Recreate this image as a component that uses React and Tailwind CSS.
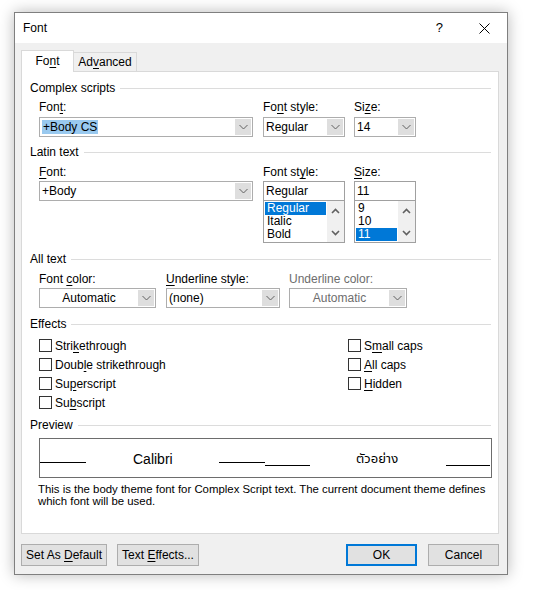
import React from "react";

function U({ children }) {
  return <span className="underline underline-offset-[2px] decoration-[1px]">{children}</span>;
}

function Chev() {
  return (
    <svg width="9" height="6" viewBox="0 0 9 6" fill="none">
      <path d="M0.5 1 L4.5 5 L8.5 1" stroke="#606060" strokeWidth="1" />
    </svg>
  );
}

function Heading({ children }) {
  return (
    <div className="flex items-center h-4">
      <span className="whitespace-nowrap">{children}</span>
      <div className="ml-[5px] flex-1 h-px bg-[#dcdcdc]" />
    </div>
  );
}

function Combo({ className, children, disabled, center }) {
  return (
    <div className={"flex h-[20px] border border-[#adadad] bg-white " + className}>
      <div
        className={
          "flex-1 flex items-center overflow-hidden whitespace-nowrap " +
          (center ? "justify-center " : "pl-[2px] ") +
          (disabled ? "text-[#6d6d6d]" : "")
        }
      >
        <span>{children}</span>
      </div>
      <div className="w-[16px] my-px mr-px bg-[#dedede] flex items-center justify-center">
        <Chev />
      </div>
    </div>
  );
}

function ListBox({ items, selected }) {
  return (
    <div className="h-[42px] border border-[#a0a0a0] border-t-0 flex bg-white">
      <div className="flex-1 px-px pt-px">
        {items.map((it) => (
          <div
            key={it}
            className={
              "h-[13px] leading-[13px] pl-[2px] " +
              (it === selected ? "bg-[#0078d7] text-white" : "")
            }
          >
            {it}
          </div>
        ))}
      </div>
      <div className="w-[17px] bg-[#f0f0f0] flex flex-col items-center justify-between pt-[7px] pb-[6px]">
        <svg width="9" height="6" viewBox="0 0 9 6" fill="none">
          <path d="M1 5 L4.5 1.5 L8 5" stroke="#606060" strokeWidth="1.6" />
        </svg>
        <svg width="9" height="6" viewBox="0 0 9 6" fill="none">
          <path d="M1 1 L4.5 4.5 L8 1" stroke="#606060" strokeWidth="1.6" />
        </svg>
      </div>
    </div>
  );
}

function Check({ children }) {
  return (
    <div className="flex items-center h-[19px]">
      <div className="w-[13px] h-[13px] border border-[#333333] bg-white" />
      <span className="ml-[3px]">{children}</span>
    </div>
  );
}

function Btn({ className, children, primary }) {
  return (
    <div
      className={
        "h-[22px] flex items-center justify-center bg-[#e1e1e1] " +
        (primary ? "border-2 border-[#0078d7] " : "border border-[#adadad] ") +
        className
      }
    >
      <span className="whitespace-nowrap">{children}</span>
    </div>
  );
}

export default function App() {
  return (
    <div className="w-[534px] h-[590px] bg-white pt-[12px] pl-[14px] font-['Liberation_Sans',Arial,sans-serif] text-[12px] text-black leading-4">
      <div className="w-[494px] h-[563px] border border-[#7f7f7f] shadow-[0_0_14px_rgba(0,0,0,0.28)] flex flex-col bg-[#f0f0f0]">
        {/* title bar */}
        <div className="h-[30px] bg-white flex items-center pl-[8px] shrink-0">
          <span>Font</span>
          <span className="ml-auto text-[13px]">?</span>
          <svg className="ml-[36px] mr-[17px]" width="11" height="11" viewBox="0 0 11 11" fill="none">
            <path d="M0.5 0.5 L10.5 10.5 M10.5 0.5 L0.5 10.5" stroke="#000" strokeWidth="1" />
          </svg>
        </div>

        {/* body */}
        <div className="flex-1 flex flex-col pl-[6px] pt-[7px]">
          <div className="flex items-end h-[22px] -mb-px">
            <div className="relative z-10 w-[53px] h-[22px] bg-white border border-[#d9d9d9] border-b-0 flex items-center justify-center pb-[1px]">
              <span>
                Fo<U>n</U>t
              </span>
            </div>
            <div className="w-[63px] h-[20px] bg-[#f0f0f0] border border-[#d9d9d9] border-l-0 flex items-center justify-center">
              <span>
                Ad<U>v</U>anced
              </span>
            </div>
          </div>

          <div className="w-[478px] h-[463px] bg-white border border-[#d9d9d9] pl-[8px] pr-[7px] pt-[8px] shrink-0">
            {/* Complex scripts */}
            <Heading>Complex scripts</Heading>
            <div className="flex pl-[9px] mt-[3px]">
              <div className="flex flex-col gap-[2px] w-[214px]">
                <div className="h-4">
                  Fon<U>t</U>:
                </div>
                <Combo className="w-[214px]">
                  <span className="bg-[#99c9ef] px-px">+Body CS</span>
                </Combo>
              </div>
              <div className="flex flex-col gap-[2px] w-[82px] ml-[10px]">
                <div className="h-4">
                  Fo<U>n</U>t style:
                </div>
                <Combo className="w-[82px]">Regular</Combo>
              </div>
              <div className="flex flex-col gap-[2px] w-[62px] ml-[9px]">
                <div className="h-4">
                  Si<U>z</U>e:
                </div>
                <Combo className="w-[62px]">14</Combo>
              </div>
            </div>

            {/* Latin text */}
            <div className="mt-[7px]">
              <Heading>Latin text</Heading>
            </div>
            <div className="flex pl-[9px] mt-[4px]">
              <div className="flex flex-col gap-[1px] w-[214px]">
                <div className="h-4">
                  <U>F</U>ont:
                </div>
                <Combo className="w-[214px]">+Body</Combo>
              </div>
              <div className="flex flex-col gap-[1px] w-[82px] ml-[10px]">
                <div className="h-4">
                  Font st<U>y</U>le:
                </div>
                <div className="h-[20px] border border-[#a0a0a0] flex items-center pl-[2px]">Regular</div>
                <div className="-mt-px">
                  <ListBox items={["Regular", "Italic", "Bold"]} selected="Regular" />
                </div>
              </div>
              <div className="flex flex-col gap-[1px] w-[62px] ml-[9px]">
                <div className="h-4">
                  <U>S</U>ize:
                </div>
                <div className="h-[20px] border border-[#a0a0a0] flex items-center pl-[2px]">11</div>
                <div className="-mt-px">
                  <ListBox items={["9", "10", "11"]} selected="11" />
                </div>
              </div>
            </div>

            {/* All text */}
            <div className="mt-[8px]">
              <Heading>All text</Heading>
            </div>
            <div className="flex pl-[9px] mt-[4px]">
              <div className="flex flex-col gap-[1px] w-[117px]">
                <div className="h-4">
                  Font <U>c</U>olor:
                </div>
                <Combo className="w-[117px]" center>
                  Automatic
                </Combo>
              </div>
              <div className="flex flex-col gap-[1px] w-[114px] ml-[10px]">
                <div className="h-4">
                  <U>U</U>nderline style:
                </div>
                <Combo className="w-[114px]">(none)</Combo>
              </div>
              <div className="flex flex-col gap-[1px] w-[118px] ml-[9px]">
                <div className="h-4 text-[#6d6d6d]">Underline color:</div>
                <Combo className="w-[118px]" center disabled>
                  Automatic
                </Combo>
              </div>
            </div>

            {/* Effects */}
            <div className="mt-[8px]">
              <Heading>Effects</Heading>
            </div>
            <div className="flex pl-[9px] mt-[4px]">
              <div className="w-[309px] flex flex-col">
                <Check>
                  Stri<U>k</U>ethrough
                </Check>
                <Check>
                  Doub<U>l</U>e strikethrough
                </Check>
                <Check>
                  Su<U>p</U>erscript
                </Check>
                <Check>
                  Su<U>b</U>script
                </Check>
              </div>
              <div className="flex flex-col">
                <Check>
                  S<U>m</U>all caps
                </Check>
                <Check>
                  <U>A</U>ll caps
                </Check>
                <Check>
                  <U>H</U>idden
                </Check>
              </div>
            </div>

            {/* Preview */}
            <div className="mt-[5px]">
              <Heading>Preview</Heading>
            </div>
            <div className="ml-[9px] mt-[5px] w-[453px] h-[40px] border border-[#6d6d6d] flex items-start">
              <div className="w-[46px] h-[24px] border-b border-black" />
              <div className="ml-[47px] mt-[12px] text-[14px] leading-4 w-[39px] whitespace-nowrap">Calibri</div>
              <div className="ml-[47px] w-[46px] h-[24px] border-b border-black" />
              <div className="w-[45px] h-[27px] border-b border-black" />
              <div className="ml-[46px] mt-[12px] text-[13px] leading-4 w-[41px] whitespace-nowrap font-['Noto_Sans_Thai','Loma','Garuda','Tlwg_Typo','DejaVu_Sans',sans-serif]">
                ตัวอย่าง
              </div>
              <div className="ml-[49px] w-[44px] h-[27px] border-b border-black" />
            </div>
            <div className="ml-[8px] mt-[5px] w-[462px] text-[11.4px] leading-[12px]">
              This is the body theme font for Complex Script text. The current document theme defines which font will
              be used.
            </div>
          </div>

          {/* buttons */}
          <div className="w-[478px] flex mt-[10px]">
            <Btn className="w-[86px]">
              Set As <U>D</U>efault
            </Btn>
            <Btn className="w-[82px] ml-[10px]">
              Text <U>E</U>ffects...
            </Btn>
            <Btn className="w-[71px] ml-auto" primary>
              OK
            </Btn>
            <Btn className="w-[71px] ml-[11px]">Cancel</Btn>
          </div>
        </div>
      </div>
    </div>
  );
}
